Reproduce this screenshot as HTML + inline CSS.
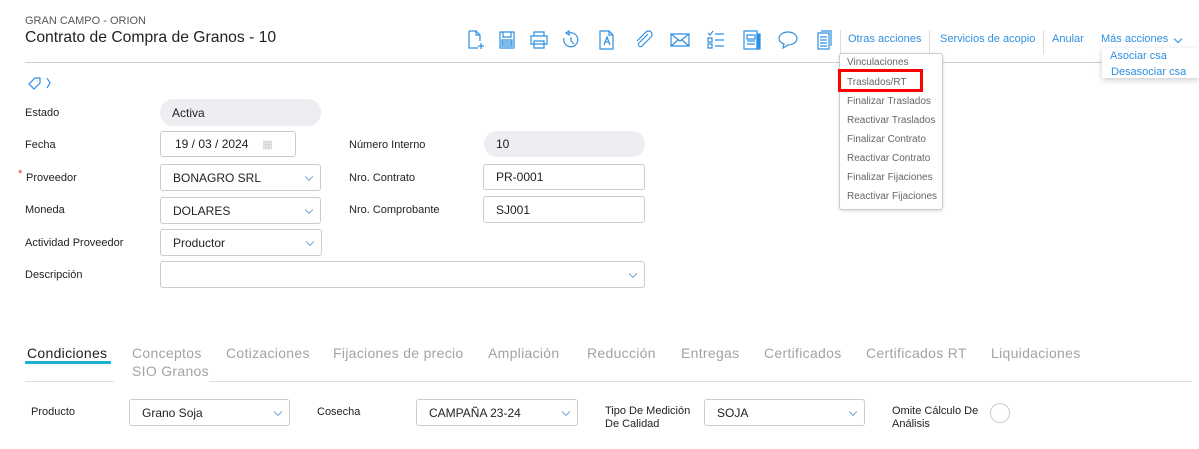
<!DOCTYPE html>
<html><head><meta charset="utf-8"><style>
body{margin:0;width:1199px;height:449px;background:#fff;font-family:"Liberation Sans",sans-serif;position:relative;overflow:hidden}
.a{position:absolute;white-space:nowrap}
.l{font-size:11px;color:#222}
.box{position:absolute;border:1px solid #c9ccd1;border-radius:3px;box-sizing:border-box;background:#fff;font-size:12px;color:#222;padding-left:12px;display:flex;align-items:center}
.pill{position:absolute;background:#eceef1;border-radius:13px;box-sizing:border-box;font-size:12px;color:#222;padding-left:12px;display:flex;align-items:center}
.chev{position:absolute;right:8px;top:50%;width:5px;height:5px;border-right:1.2px solid #6a9fd6;border-bottom:1.2px solid #6a9fd6;transform:translateY(-70%) rotate(45deg)}
.tab{position:absolute;top:345px;font-size:14px;color:#a3a3a3;letter-spacing:0.3px}
.mi{position:absolute;left:7px;font-size:10px;color:#666}
.top{position:absolute;top:33px;font-size:11px;color:#2f8fe0}
.sep{position:absolute;top:30px;width:1px;height:24px;background:#ddd}
svg.i{position:absolute;top:30px}
</style></head><body>
<div class="a" style="left:25px;top:15px;font-size:11px;color:#555">GRAN CAMPO - ORION</div>
<div class="a" style="left:25px;top:29px;font-size:15.7px;color:#222">Contrato de Compra de Granos - 10</div>
<div class="a" style="left:25px;top:62px;width:1167px;height:1px;background:#ccc"></div>

<svg class="i" style="left:466px" width="20" height="20" viewBox="0 0 20 20" fill="none" stroke="#2f8fe0" stroke-width="1.2"><path d="M3 1h7l4 4v6M3 1v17h9M10 1v4h4M15 13v6M12 16h6"/></svg>
<svg class="i" style="left:498px" width="20" height="20" viewBox="0 0 20 20" fill="none" stroke="#2f8fe0" stroke-width="1.2"><path d="M2 2h14v16H2zM5 2v5h8V2M4 10h10v6H4zM4 12h10M4 14h10"/></svg>
<svg class="i" style="left:529px" width="20" height="20" viewBox="0 0 20 20" fill="none" stroke="#2f8fe0" stroke-width="1.2"><path d="M5 6V2h10v4M2 6h16v8H2zM5 11h10v7H5zM5 14h10"/></svg>
<svg class="i" style="left:561px" width="20" height="20" viewBox="0 0 20 20" fill="none" stroke="#2f8fe0" stroke-width="1.2"><path d="M8 3a7 7 0 1 1-5 5M8 1v4l-3-2zM10 7v4l3 3"/></svg>
<svg class="i" style="left:597px" width="20" height="20" viewBox="0 0 20 20" fill="none" stroke="#2f8fe0" stroke-width="1.2"><path d="M3 1h9l4 4v14H3zM12 1v4h4M7 15l3-8 3 8M8 12h4"/></svg>
<svg class="i" style="left:634px" width="20" height="20" viewBox="0 0 20 20" fill="none" stroke="#2f8fe0" stroke-width="1.2"><path d="M14 4l-9 9a2 2 0 0 0 3 3l9-9a3.5 3.5 0 0 0-5-5L3 11"/></svg>
<svg class="i" style="left:670px" width="20" height="20" viewBox="0 0 20 20" fill="none" stroke="#2f8fe0" stroke-width="1.2"><path d="M1 4h18v12H1zM1 4l9 7 9-7M1 16l7-6M19 16l-7-6"/></svg>
<svg class="i" style="left:706px" width="20" height="20" viewBox="0 0 20 20" fill="none" stroke="#2f8fe0" stroke-width="1.2"><path d="M2 3l2 2 3-4M2 8h4v4H2zM2 14h4v4H2zM9 4h9M9 10h9M9 16h9"/></svg>
<svg class="i" style="left:742px" width="20" height="20" viewBox="0 0 20 20" fill="none" stroke="#2f8fe0" stroke-width="1.2"><path d="M2 1h13v18H2zM5 5h8v4H5zM5 11h8M5 14h8"/><path d="M15 4h3v15h-3z" fill="#2f8fe0"/></svg>
<svg class="i" style="left:778px" width="20" height="20" viewBox="0 0 20 20" fill="none" stroke="#2f8fe0" stroke-width="1.2"><path d="M10 2c5 0 9 3 9 6.5S15 15 10 15l-5 3 1-4c-3-1-5-3-5-5.5C1 5 5 2 10 2z"/></svg>
<svg class="i" style="left:814px" width="20" height="20" viewBox="0 0 20 20" fill="none" stroke="#2f8fe0" stroke-width="1.2"><path d="M4 3h11v16H4zM7 1h10v15M6 7h7M6 10h7M6 13h7M6 16h7"/></svg>

<div class="sep" style="left:840px"></div>
<div class="top" style="left:848px">Otras acciones</div>
<div class="sep" style="left:929px"></div>
<div class="top" style="left:940px">Servicios de acopio</div>
<div class="sep" style="left:1043px"></div>
<div class="top" style="left:1052px">Anular</div>
<div class="top" style="left:1101px">Más acciones</div>
<div class="a" style="left:1175px;top:36px;width:5px;height:5px;border-right:1.2px solid #2f8fe0;border-bottom:1.2px solid #2f8fe0;transform:rotate(45deg)"></div>

<div class="a" style="left:839px;top:53px;width:102px;height:155px;border:1px solid #ccc;border-radius:3px;background:#fff;box-shadow:0 1px 3px rgba(0,0,0,.15)">
<div class="mi" style="top:3px">Vinculaciones</div>
<div class="mi" style="top:23px">Traslados/RT</div>
<div class="mi" style="top:42px">Finalizar Traslados</div>
<div class="mi" style="top:61px">Reactivar Traslados</div>
<div class="mi" style="top:80px">Finalizar Contrato</div>
<div class="mi" style="top:99px">Reactivar Contrato</div>
<div class="mi" style="top:118px">Finalizar Fijaciones</div>
<div class="mi" style="top:137px">Reactivar Fijaciones</div>
</div>
<div class="a" style="left:838px;top:69px;width:85px;height:23px;border:3px solid #f00;box-sizing:border-box"></div>

<div class="a" style="left:1102px;top:48px;width:97px;height:30px;background:#fff;box-shadow:0 2px 6px rgba(0,0,0,.2)">
<div class="a" style="left:8px;top:2px;font-size:11px;color:#2f8fe0">Asociar csa</div>
<div class="a" style="left:9px;top:18px;font-size:11px;color:#2f8fe0">Desasociar csa</div>
</div>

<svg class="a" style="left:27px;top:76px" width="24" height="14" viewBox="0 0 24 14" fill="none" stroke="#2f8fe0" stroke-width="1.2"><path d="M2 8l6-6h5v5l-6 6zM10 5h.5M20 2l3 5-3 5"/></svg>

<div class="a l" style="left:25px;top:107px">Estado</div>
<div class="pill" style="left:160px;top:99px;width:161px;height:27px">Activa</div>
<div class="a l" style="left:25px;top:139px">Fecha</div>
<div class="box" style="left:160px;top:131px;width:136px;height:26px;padding-left:14px">19 / 03 / 2024<span style="margin-left:14px;color:#ccc;font-size:11px">▦</span></div>
<div class="a l" style="left:349px;top:139px">Número Interno</div>
<div class="pill" style="left:484px;top:131px;width:161px;height:26px">10</div>
<div class="a" style="left:18px;top:168px;color:#e33;font-size:11px">*</div>
<div class="a l" style="left:26px;top:172px">Proveedor</div>
<div class="box" style="left:160px;top:164px;width:161px;height:27px">BONAGRO SRL<i class="chev"></i></div>
<div class="a l" style="left:349px;top:172px">Nro. Contrato</div>
<div class="box" style="left:483px;top:164px;width:162px;height:26px">PR-0001</div>
<div class="a l" style="left:25px;top:204px">Moneda</div>
<div class="box" style="left:160px;top:197px;width:161px;height:27px">DOLARES<i class="chev"></i></div>
<div class="a l" style="left:349px;top:204px">Nro. Comprobante</div>
<div class="box" style="left:483px;top:196px;width:162px;height:27px">SJ001</div>
<div class="a l" style="left:25px;top:237px">Actividad Proveedor</div>
<div class="box" style="left:160px;top:229px;width:162px;height:27px">Productor<i class="chev"></i></div>
<div class="a l" style="left:25px;top:269px">Descripción</div>
<div class="box" style="left:160px;top:261px;width:485px;height:27px"><i class="chev"></i></div>

<div class="tab" style="left:27px;color:#222">Condiciones</div>
<div class="a" style="left:25px;top:361px;width:86px;height:3px;background:#1fb0d6"></div>
<div class="tab" style="left:132px">Conceptos</div>
<div class="tab" style="left:226px">Cotizaciones</div>
<div class="tab" style="left:333px">Fijaciones de precio</div>
<div class="tab" style="left:488px">Ampliación</div>
<div class="tab" style="left:587px">Reducción</div>
<div class="tab" style="left:681px">Entregas</div>
<div class="tab" style="left:764px">Certificados</div>
<div class="tab" style="left:866px">Certificados RT</div>
<div class="tab" style="left:991px">Liquidaciones</div>
<div class="tab" style="left:132px;top:363px">SIO Granos</div>
<div class="a" style="left:25px;top:381px;width:89px;height:1px;background:#ddd"></div>
<div class="a" style="left:209px;top:381px;width:983px;height:1px;background:#ddd"></div>

<div class="a l" style="left:31px;top:406px">Producto</div>
<div class="box" style="left:129px;top:399px;width:161px;height:27px">Grano Soja<i class="chev"></i></div>
<div class="a l" style="left:317px;top:406px">Cosecha</div>
<div class="box" style="left:416px;top:399px;width:162px;height:27px">CAMPAÑA 23-24<i class="chev"></i></div>
<div class="a l" style="left:605px;top:405px;line-height:13px">Tipo De Medición<br>De Calidad</div>
<div class="box" style="left:704px;top:399px;width:161px;height:27px">SOJA<i class="chev"></i></div>
<div class="a l" style="left:892px;top:405px;line-height:13px">Omite Cálculo De<br>Análisis</div>
<div class="a" style="left:990px;top:403px;width:18px;height:18px;border:1px solid #ccc;border-radius:50%"></div>
</body></html>
